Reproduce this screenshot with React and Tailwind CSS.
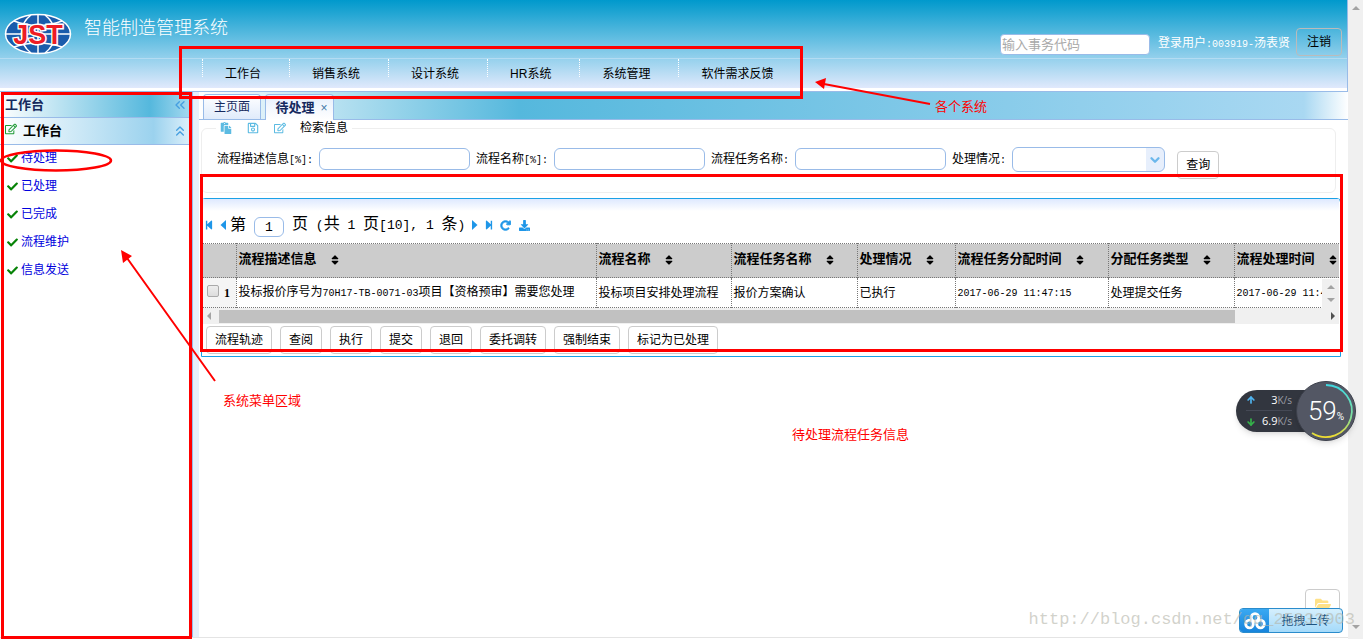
import React from "react";
import {
  FaCheck, FaSort, FaStepBackward, FaStepForward,
  FaRegEdit, FaPaste, FaRegSave, FaDownload, FaFolderOpen,
} from "react-icons/fa";
import { FaArrowRotateRight } from "react-icons/fa6";
import { ChevronsLeft, ChevronsUp, ChevronDown, ArrowUp, ArrowDown } from "lucide-react";

const navItems = ["工作台", "销售系统", "设计系统", "HR系统", "系统管理", "软件需求反馈"];
const menuItems = ["待处理", "已处理", "已完成", "流程维护", "信息发送"];
const actions = ["流程轨迹", "查阅", "执行", "提交", "退回", "委托调转", "强制结束", "标记为已处理"];
const columns = [
  { title: "流程描述信息", width: "w-[360px]", value: <>投标报价序号为<Mono>70H17-TB-0071-03</Mono>项目【资格预审】需要您处理</> },
  { title: "流程名称", width: "w-[135px]", value: "投标项目安排处理流程" },
  { title: "流程任务名称", width: "w-[126px]", value: "报价方案确认" },
  { title: "处理情况", width: "w-[98px]", value: "已执行" },
  { title: "流程任务分配时间", width: "w-[153px]", value: <Mono>2017-06-29 11:47:15</Mono> },
  { title: "分配任务类型", width: "w-[126px]", value: "处理提交任务" },
  { title: "流程处理时间", width: "w-auto", value: <Mono>2017-06-29 11:47:20</Mono> },
];

function Mono({ children }) {
  return <span className="font-['Liberation_Mono',monospace] text-[10px]">{children}</span>;
}

function Logo() {
  return (
    <svg viewBox="0 0 68 42" className="h-[42px] w-[68px]" role="img" aria-label="JST">
      <ellipse cx="34" cy="21" rx="32.5" ry="19.5" fill="#1a5cab" stroke="#fff" strokeWidth="1.5" />
      <g fill="none" stroke="#fff" strokeWidth="1.5">
        <path d="M34 1v40M1 21h66M10 8Q34 17 58 8M10 34Q34 26 58 34" />
        <path d="M27 2C14 12 14 30 27 40M41 2C54 12 54 30 41 40" />
      </g>
      <text x="34" y="30.500" textAnchor="middle" fill="#ee1c25" stroke="#fff" strokeWidth="2.800" paintOrder="stroke" className="font-['Liberation_Sans',sans-serif] text-[27px] font-bold">JST</text>
    </svg>
  );
}

function Header() {
  return (
    <header className="border-r border-b border-[#99bbe8] pb-[3px]">
      <div className="bg-[linear-gradient(180deg,#0099cc_0,#93d0ec_58px,#e0e9fc_100%)]">
        <div className="flex h-[58px] items-start">
          <div className="pt-[13px] pl-1"><Logo /></div>
          <h1 className="pt-4 pl-3 text-[18px] leading-6 font-light text-white">智能制造管理系统</h1>
          <div className="ml-auto flex items-start pr-[5px]">
            <input aria-label="事务代码" placeholder="输入事务代码" className="mt-[34px] h-[21px] w-[150px] rounded border border-[#99bbe8] bg-white px-px text-[13px] placeholder:text-[#a9a9a9]" />
            <span className="mt-[34px] ml-2 w-[134px] text-xs leading-[18px] whitespace-nowrap text-white">登录用户<Mono>:003919-</Mono>汤表贤</span>
            <button className="mt-7 ml-1 h-7 w-[46px] rounded border border-[#bbb] text-xs">注销</button>
          </div>
        </div>
        <nav className="flex h-[30px] border-t border-[#b4dcf2] pl-[202px] text-xs">
          {navItems.map((item) => (
            <a key={item} href="#" className="flex h-[18px] items-start border-l border-dotted border-white pt-[5px] pr-7 pl-[22px] leading-5 whitespace-nowrap">{item}</a>
          ))}
        </nav>
      </div>
    </header>
  );
}

function Sidebar() {
  return (
    <aside className="w-[193px] shrink-0 border-r border-[#99bbe8]">
      <div className="flex h-[26px] items-center justify-between border-b border-[#99bbe8] bg-[linear-gradient(90deg,white_0,#55b8dd_78%,#a9daf0_100%)] pr-1 pl-[5px] text-[13px] font-bold text-[#15295e]">
        工作台<ChevronsLeft className="size-4 text-[#469fe0]" strokeWidth={2} />
      </div>
      <div className="flex h-[27px] items-center border-b border-[#99bbe8] bg-[linear-gradient(90deg,white_0,#9bd2ee_80%,#e0f1fb_100%)] pr-1 pl-[5px] text-[13px] font-bold">
        <FaRegEdit className="mb-1 size-3 text-[#1f9a35]" /><span className="ml-1.5">工作台</span>
        <ChevronsUp className="ml-auto size-4 text-[#469fe0]" strokeWidth={2} />
      </div>
      <ul>
        {menuItems.map((item) => (
          <li key={item} className="h-7 text-xs leading-[26px]">
            <a href="#" className="flex items-center gap-[3px] pl-[7px] text-[#0000dd]">
              <FaCheck className="size-[11px] text-[#078307]" />{item}
            </a>
          </li>
        ))}
      </ul>
    </aside>
  );
}

function Field({ id, label, suffix }) {
  return (
    <>
      <label htmlFor={id} className="whitespace-nowrap">{label}<Mono>{suffix}</Mono></label>
      <input id={id} className="h-[22px] w-[151px] rounded-md border border-[#99bbe8] bg-white px-1" />
    </>
  );
}

function SearchForm() {
  return (
    <fieldset className="mr-3 ml-[2px] h-[73px] rounded-md border border-[#eee]">
      <legend className="ml-3.5 flex h-4 items-center px-1 text-xs">
        <span className="flex gap-[15px] text-[#5cbbe2]"><FaPaste className="size-3" /><FaRegSave className="size-3" /><FaRegEdit className="size-3" /></span>
        <span className="ml-3.5">检索信息</span>
      </legend>
      <div className="flex items-center gap-1.5 pt-[9px] pl-[15px] text-xs">
        <Field id="desc" label="流程描述信息" suffix="[%]:" />
        <Field id="name" label="流程名称" suffix="[%]:" />
        <Field id="task" label="流程任务名称" suffix=":" />
        <label htmlFor="state" className="whitespace-nowrap">处理情况<Mono>:</Mono></label>
        <div className="relative h-[25px] w-[153px]">
          <select id="state" className="size-full appearance-none rounded-md border border-[#99bbe8] bg-linear-to-r from-white from-88% to-[#e7effc] to-88%" />
          <ChevronDown className="pointer-events-none absolute top-1.5 right-[3px] size-3.5 text-[#6cb8ec]" strokeWidth={4} />
        </div>
        <button className="mt-1.5 -mb-1.5 ml-1.5 h-7 rounded border border-[#ccc] px-2">查询</button>
      </div>
    </fieldset>
  );
}

function Pager() {
  return (
    <div className="flex h-11 items-center bg-[linear-gradient(180deg,#deE9ff_0,white_12px)] pt-2 text-base text-black">
      <button aria-label="首页" className="pl-px text-[#1e96e8]"><FaStepBackward className="size-2.5" /></button>
      <button aria-label="上一页" className="mr-1 ml-1.5 text-[#1e96e8]">
        <svg viewBox="0 0 6 10" className="h-2.5 w-1.5" fill="currentColor"><path d="M6 0L0.500 5L6 10Z" /></svg>
      </button>
      <label htmlFor="page" className="leading-5">第</label>
      <input id="page" defaultValue="1" className="mx-2 mt-1 h-5 w-[30px] rounded-md border border-[#99bbe8] text-center font-['Liberation_Mono',monospace] text-[13px]" />
      <span className="w-[178px] leading-5 whitespace-pre">页<PagerMono> (</PagerMono>共<PagerMono> 1 </PagerMono>页<PagerMono>[10], 1 </PagerMono>条<PagerMono>)</PagerMono></span>
      <span className="flex items-center text-[#1e96e8]">
        <button aria-label="下一页" className="ml-0.5">
          <svg viewBox="0 0 6 10" className="h-2.5 w-1.5" fill="currentColor"><path d="M0 0L5.500 5L0 10Z" /></svg>
        </button>
        <button aria-label="末页" className="ml-1.5"><FaStepForward className="size-2.5" /></button>
        <button aria-label="刷新" className="ml-1.5"><FaArrowRotateRight className="size-[11px]" strokeWidth={40} /></button>
        <button aria-label="下载" className="ml-2"><FaDownload className="size-[11px]" /></button>
      </span>
    </div>
  );
}

function PagerMono({ children }) {
  return <span className="font-['Liberation_Mono',monospace] text-[13px]">{children}</span>;
}

function TaskTable() {
  return (
    <div className="relative overflow-hidden">
      <table className="w-full table-fixed border-collapse text-left text-xs whitespace-nowrap">
        <thead>
          <tr className="h-[34px] border-y border-dotted border-[#777] bg-[#ccc]">
            <th className="w-[33px]" aria-label="选择" />
            {columns.map((c) => (
              <th key={c.title} className={"border-l border-dotted border-[#777] p-0 pb-1 pl-0.5 text-[13px] leading-5 " + c.width}>
                <span className="flex items-center">{c.title}<FaSort className="mt-0.5 ml-3 size-3 shrink-0" /></span>
              </th>
            ))}
          </tr>
        </thead>
        <tbody>
          <tr className="h-[30px] border-b border-dotted border-[#777]">
            <td className="bg-[#f5f5f5] p-0 pl-1">
              <span className="flex items-center gap-[5px]"><input type="checkbox" aria-label="选择第1行" className="mb-1 size-3 appearance-none rounded-[2px] border border-[#aaa] bg-linear-to-b from-[#eee] to-[#ddd]" /><b className="font-['Liberation_Serif',serif]">1</b></span>
            </td>
            {columns.map((c) => <td key={c.title} className="overflow-hidden border-l border-dotted border-[#777] p-0 pl-0.5 leading-5">{c.value}</td>)}
          </tr>
        </tbody>
      </table>
      <div className="absolute right-0 bottom-0 flex h-[29px] w-[17px] flex-col items-center justify-between bg-[#f0f0f0] py-1.5 text-[#a3a3a3]">
        <svg viewBox="0 0 8 4" className="h-1 w-2" fill="currentColor"><path d="M0 4L4 0L8 4Z" /></svg>
        <svg viewBox="0 0 8 4" className="h-1 w-2" fill="currentColor"><path d="M0 0L4 4L8 0Z" /></svg>
      </div>
    </div>
  );
}

function HorizontalScroll() {
  return (
    <div className="flex h-4 items-center bg-[#f0f0f0] px-1">
      <svg viewBox="0 0 4 8" className="mr-2 h-2 w-1 shrink-0" fill="#a3a3a3"><path d="M4 0L0 4L4 8Z" /></svg>
      <div className="flex-1"><div className="h-[13px] w-[92%] bg-[#c1c1c1]" /></div>
      <svg viewBox="0 0 4 8" className="ml-2 h-2 w-1 shrink-0" fill="#505050"><path d="M0 0L4 4L0 8Z" /></svg>
    </div>
  );
}

function Workspace() {
  return (
    <main className="min-w-0 flex-1">
      <div className="flex h-7 items-end border-b border-[#99bbe8] bg-[linear-gradient(90deg,white_0,#55b8dd_320px,#a9d8f2_calc(100%-44px),white_100%)] pl-1 text-[#15295e]">
        <button className="h-[25px] w-[58px] rounded-t border border-b-0 border-[#99bbe8] bg-linear-to-b from-white to-[#e0ebfb] text-xs">主页面</button>
        <button className="ml-1 -mb-px flex h-[26px] w-[69px] items-center justify-center gap-1.5 rounded-t border border-b-0 border-[#99bbe8] bg-linear-to-b from-[#e6effc] to-white pl-1 text-[13px] font-bold">待处理<span className="text-xs font-normal text-[#4479a8]">×</span></button>
      </div>
      <SearchForm />
      <section className="mt-[5px] mr-[7px] ml-[2px] rounded-t border border-[#1aa1e6] px-px">
        <Pager />
        <TaskTable />
        <HorizontalScroll />
        <div className="flex gap-2 px-[3px] pt-0.5 pb-0.5">
          {actions.map((a) => <button key={a} className="h-7 rounded border border-[#ccc] px-2 text-xs whitespace-nowrap">{a}</button>)}
        </div>
      </section>
    </main>
  );
}

function Annotations() {
  return (
    <div className="pointer-events-none absolute inset-0 text-[13px] leading-5 text-[#f00]">
      <div className="absolute top-[92px] bottom-0 left-px w-[191px] border-[3px] border-[#f00]" />
      <div className="absolute top-[46px] left-[179px] h-[53px] w-[624px] border-[3px] border-[#f00]" />
      <div className="absolute top-[174px] right-[20px] left-[200px] h-[178px] border-[3px] border-[#f00]" />
      <svg className="absolute inset-0 size-full" fill="none" stroke="#f00" strokeWidth="2">
        <ellipse cx="56" cy="160.500" rx="55" ry="10" strokeWidth="2.500" />
        <path d="M930 104L824 84M215 381L127 258" />
        <path d="M815 82L826 78L824 89ZM121 250L132 256L123 263Z" fill="#f00" stroke="none" />
      </svg>
      <span className="absolute top-[97px] left-[935px]">各个系统</span>
      <span className="absolute top-[391px] left-[223px]">系统菜单区域</span>
      <span className="absolute top-[425px] left-[792px]">待处理流程任务信息</span>
    </div>
  );
}

function SpeedWidget() {
  return (
    <div className="absolute top-[381px] right-[7px] flex items-center font-['Open_Sans',sans-serif] text-white">
      <div className="-mr-3 h-[42px] w-[72px] rounded-l-full bg-[#32363f] pr-4 pl-2.5 text-[11px] shadow-md">
        <div className="flex h-[21px] items-center justify-between border-b border-[#454955]"><ArrowUp className="size-2.5 text-[#4fb4f0]" strokeWidth={4} /><span>3<span className="text-[10px] text-[#9a9da5]">K/s</span></span></div>
        <div className="flex h-[21px] items-center justify-between"><ArrowDown className="size-2.5 text-[#35b44a]" strokeWidth={4} /><span>6.9<span className="text-[10px] text-[#9a9da5]">K/s</span></span></div>
      </div>
      <div className="relative flex size-[60px] items-center justify-center rounded-full border border-[#3c404b] bg-[#535764] shadow-md">
        <svg viewBox="0 0 60 60" className="absolute -inset-px size-[60px]" fill="none" strokeWidth="1.800">
          <defs><linearGradient id="ring" x1="0" y1="0" x2="0" y2="1"><stop stopColor="#3fd8e0" /><stop offset=".6" stopColor="#7fe0a0" /><stop offset="1" stopColor="#f0dc30" /></linearGradient></defs>
          <path d="M30 4A26 26 0 1 1 16 52" stroke="url(#ring)" />
        </svg>
        <span className="relative font-['Roboto',sans-serif] text-[26px] font-light">59<span className="text-[10px] font-normal">%</span></span>
      </div>
    </div>
  );
}

function UploadWidget() {
  return (
    <>
      <button aria-label="打开文件夹" className="absolute right-[23px] bottom-[22px] flex h-7 w-[35px] justify-center rounded border border-[#ccc] bg-white pt-1.5"><FaFolderOpen className="size-4 text-[#ffe188]" /></button>
      <button className="absolute right-[20px] bottom-[6px] flex h-[25px] w-[104px] items-center overflow-hidden rounded-sm border border-[#2a8ccc] bg-linear-to-b from-[#d5effd] to-[#a4dafa] text-xs text-[#1e5480]">
        <span className="flex h-full w-[29px] items-center justify-center bg-linear-to-b from-[#3aa9f2] to-[#1684dc]">
          <svg viewBox="0 0 22 18" className="h-[18px] w-[22px]" fill="none" stroke="#fff" strokeWidth="2.800"><circle cx="11" cy="5.500" r="3.800" /><circle cx="5.500" cy="12" r="3.800" /><circle cx="16.500" cy="12" r="3.800" /></svg>
        </span>
        <span className="flex-1">拖拽上传</span>
      </button>
      <span className="pointer-events-none absolute right-[8px] bottom-[9px] font-['Liberation_Mono',monospace] text-[17px] leading-5 text-[#b4b4a8]/60">http://blog.csdn.net/qq_25933903</span>
    </>
  );
}

export default function App() {
  return (
    <div className="relative flex min-h-screen bg-white font-['Liberation_Sans','Noto_Sans_CJK_SC',sans-serif] text-black">
      <div className="flex min-w-0 flex-1 flex-col">
        <Header />
        <div className="flex flex-1">
          <Sidebar />
          <div className="w-1.5 shrink-0 bg-[#e6effa]" />
          <Workspace />
        </div>
        <footer className="h-0.5 border-t border-[#e4e4e4]" />
      </div>
      <div className="flex w-[15px] shrink-0 flex-col items-center justify-between bg-[#f0f0f0] pt-1.5 pb-2.5">
        <svg viewBox="0 0 8 4" className="h-1 w-2" fill="#a3a3a3"><path d="M0 4L4 0L8 4Z" /></svg>
        <svg viewBox="0 0 8 4" className="h-1 w-2" fill="#a3a3a3"><path d="M0 0L4 4L8 0Z" /></svg>
      </div>
      <Annotations />
      <SpeedWidget />
      <UploadWidget />
    </div>
  );
}
